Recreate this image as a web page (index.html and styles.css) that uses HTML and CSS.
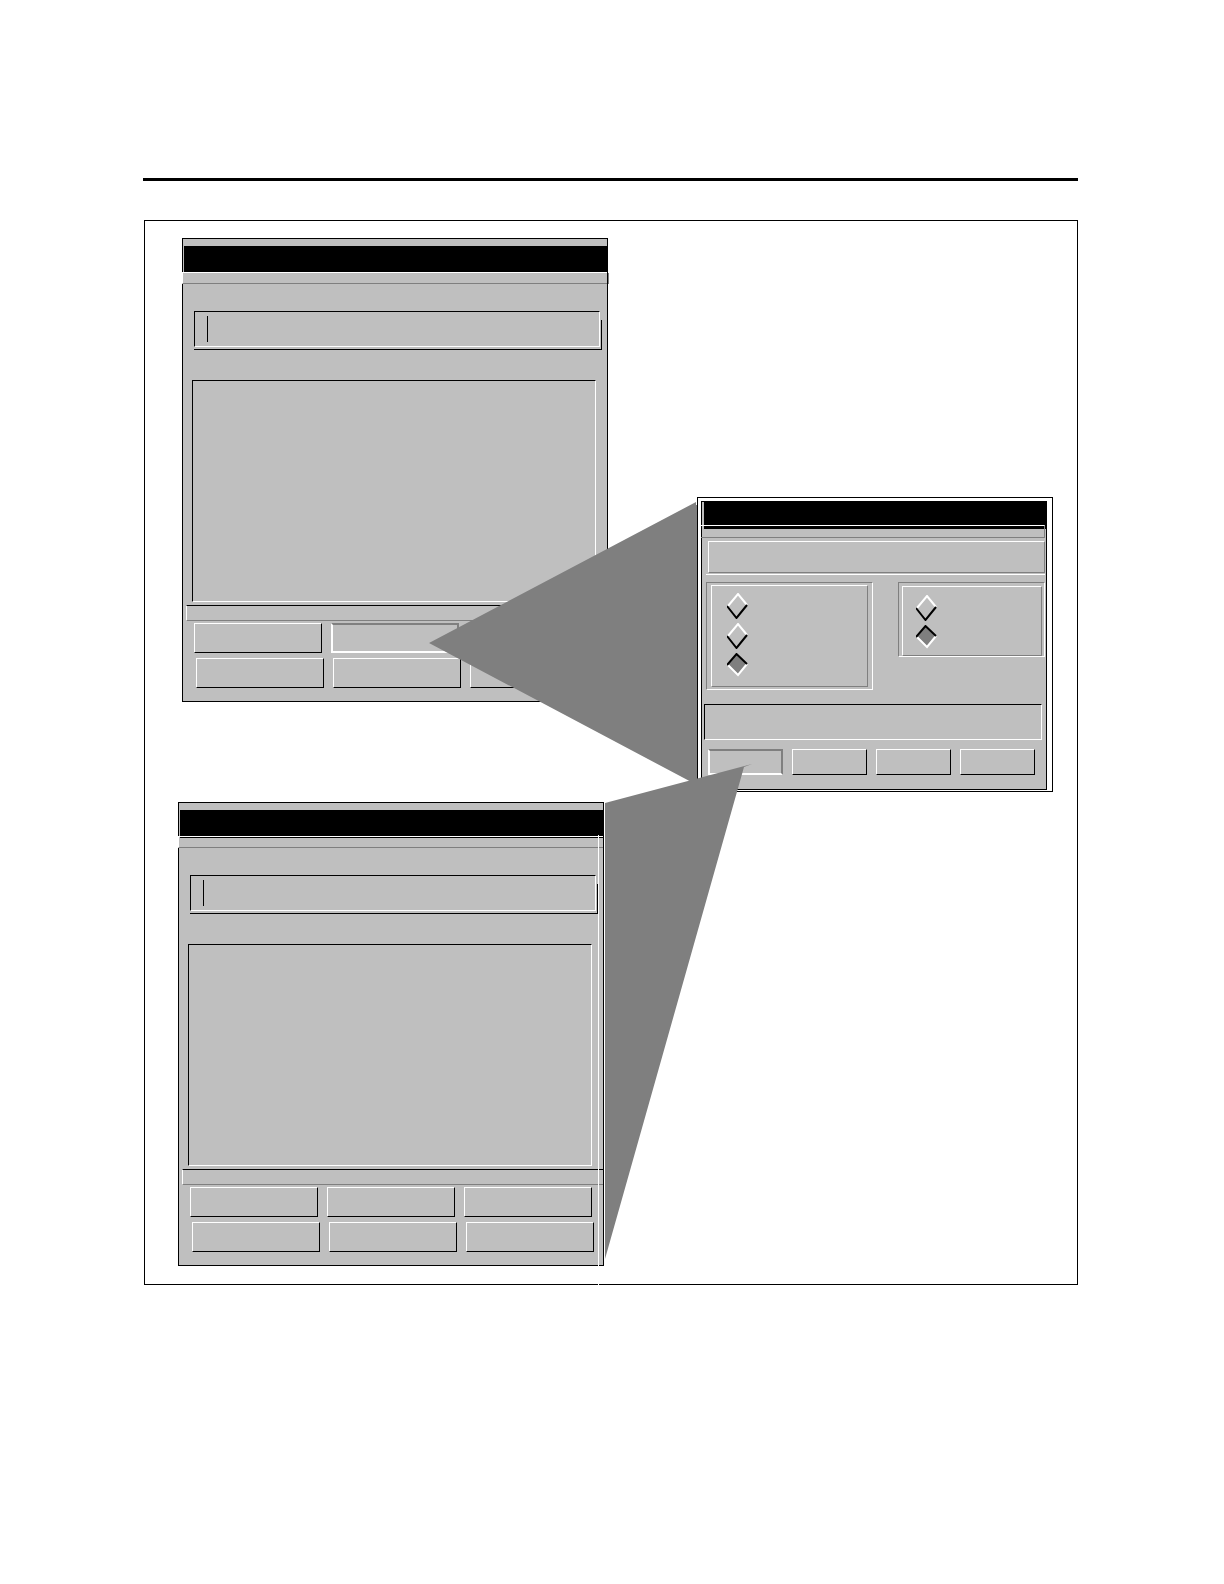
FILE: index.html
```html
<!DOCTYPE html>
<html lang="en">
  <head>
    <meta charset="UTF-8" />
    <meta name="viewport" content="width=device-width, initial-scale=1.0" />
    <title>Dialogs</title>
    <link rel="stylesheet" href="styles.css">
  </head>
  <body>
    <header class="page-header"></header>
    <main class="canvas">
      <div class="column">
        <form class="window">
          <div class="titlebar"></div>
          <div class="menubar"></div>
          <div class="entry">
            <input type="text" aria-label="Entry" />
            <span class="caret"></span>
          </div>
          <select class="list" size="8" aria-label="List"></select>
          <div class="separator"></div>
          <div class="buttons">
            <button type="button" aria-label="Button 1"></button>
            <button type="button" class="pressed" aria-label="Button 2"></button>
            <button type="button" aria-label="Button 3"></button>
          </div>
          <div class="buttons second">
            <button type="button" aria-label="Button 4"></button>
            <button type="button" aria-label="Button 5"></button>
            <button type="button" aria-label="Button 6"></button>
          </div>
        </form>

        <form class="window lower">
          <div class="titlebar"></div>
          <div class="menubar"></div>
          <div class="entry">
            <input type="text" aria-label="Entry" />
            <span class="caret"></span>
          </div>
          <select class="list" size="8" aria-label="List"></select>
          <div class="separator"></div>
          <div class="buttons">
            <button type="button" aria-label="Button 1"></button>
            <button type="button" aria-label="Button 2"></button>
            <button type="button" aria-label="Button 3"></button>
          </div>
          <div class="buttons second">
            <button type="button" aria-label="Button 4"></button>
            <button type="button" aria-label="Button 5"></button>
            <button type="button" aria-label="Button 6"></button>
          </div>
        </form>
      </div>

      <form class="dialog">
        <div class="dialog-inner">
          <div class="dialog-title"></div>
          <div class="dialog-menu"></div>
          <div class="message"><div class="message-box"></div></div>
          <div class="groups">
            <div class="group">
              <div class="group-inner">
                <label class="radio">
                  <input type="radio" name="first" aria-label="Option 1" />
                  <svg viewBox="0 0 21 26"><path class="light" d="M1 13L11 1L20 12" /><path class="dark" d="M0 13L9.500 25L20 12" /></svg>
                </label>
                <label class="radio">
                  <input type="radio" name="first" aria-label="Option 2" />
                  <svg viewBox="0 0 21 26"><path class="light" d="M1 13L11 1L20 12" /><path class="dark" d="M0 13L9.500 25L20 12" /></svg>
                </label>
                <label class="radio">
                  <input type="radio" name="first" aria-label="Option 3" checked />
                  <svg viewBox="0 0 21 26"><path class="fill" d="M0 11L9.500 1L20 11L11 22Z" /><path class="light" d="M1 12L11 22L20 11" /><path class="dark" d="M0 12L9.500 1L20 11" /></svg>
                </label>
              </div>
            </div>
            <div class="group small">
              <div class="group-inner">
                <label class="radio">
                  <input type="radio" name="second" aria-label="Option 1" />
                  <svg viewBox="0 0 21 26"><path class="light" d="M1 13L11 1L20 12" /><path class="dark" d="M0 13L9.500 25L20 12" /></svg>
                </label>
                <label class="radio">
                  <input type="radio" name="second" aria-label="Option 2" checked />
                  <svg viewBox="0 0 21 26"><path class="fill" d="M0 11L9.500 1L20 11L11 22Z" /><path class="light" d="M1 12L11 22L20 11" /><path class="dark" d="M0 12L9.500 1L20 11" /></svg>
                </label>
              </div>
            </div>
          </div>
          <input class="field" type="text" aria-label="Field" />
          <div class="dialog-buttons">
            <button type="button" class="pressed" aria-label="Button 1"></button>
            <button type="button" aria-label="Button 2"></button>
            <button type="button" aria-label="Button 3"></button>
            <button type="button" aria-label="Button 4"></button>
          </div>
        </div>
      </form>

      <svg class="callouts" aria-hidden="true">
        <path d="M284 422L551 281V284H552V564Z" />
        <path d="M460 582L607 543L599 546L460 1038Z" />
        <path class="seam" d="M459.500 581V615M459.500 628V948M459.500 964V1038M453.500 614V1064" />
      </svg>
    </main>
  </body>
</html>
```
FILE: styles.css
```css
* {
  box-sizing: border-box;
  margin: 0;
  padding: 0;
}
body {
  padding: 0 146px 0 144px;
  background-color: #fff;
  font-family: "Liberation Sans", Arial, sans-serif;
}
.page-header {
  margin-left: -1px;
  padding-top: 178px;
  border-bottom: 3px solid #000;
}
.canvas {
  position: relative;
  display: flex;
  justify-content: space-between;
  align-items: flex-start;
  margin-top: 39px;
  padding: 17px 24px 18px 33px;
  border: 1px solid #000;
}
.column {
  display: flex;
  flex-direction: column;
  gap: 100px;
}
/* main windows */
.window {
  width: 426px;
  margin-left: 4px;
  padding: 7px 0 13px;
  border: 1px solid #000;
  background-color: #bfbfbf;
}
.lower {
  margin-left: 0;
}
.titlebar {
  height: 26px;
  margin-left: 1px;
  background-color: #000;
}
.menubar {
  position: relative;
  height: 12px;
  margin-left: -1px;
  border-top: 1px solid #fff;
  border-bottom: 1px solid #7f7f7f;
  border-left: 1px solid #fff;
}
.menubar::after {
  content: "";
  position: absolute;
  top: 0;
  right: -2px;
  width: 1px;
  height: 11px;
  background-color: #7f7f7f;
}
.lower .menubar::after {
  display: none;
}
.lower .menubar::before {
  content: "";
  position: absolute;
  top: 0;
  left: 1px;
  right: 0;
  height: 1px;
  background-color: #000;
}
.entry {
  position: relative;
  height: 39px;
  margin: 27px 5px 0 11px;
  padding-right: 2px;
  border-bottom: 1px solid #000;
}
.entry::after {
  content: "";
  position: absolute;
  right: 0;
  bottom: 0;
  width: 1px;
  height: 29px;
  background-color: #000;
}
.entry input,
.list,
.field {
  display: block;
  appearance: none;
  border: 1px solid;
  border-color: #000 #fff #fff #000;
  border-radius: 0;
  outline: none;
  background-color: transparent;
}
.entry input {
  width: 100%;
  height: 36px;
  padding: 0 16px;
}
.caret {
  position: absolute;
  top: 5px;
  left: 13px;
  width: 1px;
  height: 26px;
  background-color: #000;
}
.list {
  width: calc(100% - 20px);
  height: 222px;
  margin: 30px 11px 0 9px;
}
.separator {
  height: 16px;
  margin: 3px 0 0 3px;
  border-top: 1px solid #000;
  border-bottom: 1px solid #7f7f7f;
  border-left: 1px solid #fff;
}
.buttons {
  display: grid;
  grid-template-columns: repeat(3, 128px);
  gap: 9px;
  margin: 2px 0 0 11px;
}
.second {
  margin: 5px 0 0 13px;
}
button {
  height: 30px;
  border: 1px solid;
  border-color: #fff #000 #000 #fff;
  background-color: #bfbfbf;
}
.pressed {
  border-width: 2px;
  border-color: #7f7f7f #7f7f7f #fff #fff;
}
/* dialog */
.dialog {
  width: 356px;
  margin-top: 259px;
  padding: 3px 5px 1px 3px;
  border: 1px solid #000;
  background-color: #fff;
}
.dialog-inner {
  padding-bottom: 14px;
  border: 1px solid #000;
  background-color: #bfbfbf;
}
.dialog-title {
  height: 27px;
  margin: 0 -1px 0 2px;
  background-color: #000;
}
.dialog-menu {
  height: 13px;
  margin: -4px 1px 0 -1px;
  border-top: 1px solid #fff;
  border-right: 1px solid #7f7f7f;
  border-bottom: 1px solid #7f7f7f;
}
.message {
  margin: 3px 1px 0 4px;
  padding: 0 0 1px 2px;
  border-bottom: 1px solid #fff;
}
.message-box {
  height: 32px;
  border: 1px solid;
  border-color: #fff #7f7f7f #7f7f7f #fff;
}
.groups {
  display: flex;
  justify-content: space-between;
  align-items: flex-start;
  height: 108px;
  margin: 7px 1px 0 4px;
}
.group {
  width: 167px;
  padding: 2px 4px 2px 4px;
  border: 1px solid;
  border-color: #7f7f7f #fff #fff #7f7f7f;
}
.group-inner {
  display: flex;
  flex-direction: column;
  gap: 4px;
  padding: 7px 15px;
  border: 1px solid;
  border-color: #fff #7f7f7f #7f7f7f #fff;
}
.small {
  width: 147px;
  padding: 3px 2px 0 3px;
}
.small .group-inner {
  padding: 8px 13px 4px;
}
.radio {
  position: relative;
  height: 26px;
}
.radio input {
  position: absolute;
  width: 21px;
  height: 26px;
  opacity: 0;
}
.radio svg {
  display: block;
  width: 21px;
  height: 26px;
  fill: none;
  stroke-width: 2;
}
.light {
  stroke: #fff;
}
.dark {
  stroke: #000;
}
.fill {
  fill: #7f7f7f;
}
.field {
  width: calc(100% - 6px);
  height: 36px;
  margin: 14px 4px 0 2px;
}
.dialog-buttons {
  display: grid;
  grid-template-columns: repeat(4, 75px);
  gap: 9px;
  margin: 9px 0 0 6px;
}
.dialog-buttons button {
  height: 26px;
}
/* callouts over the windows */
.callouts {
  position: absolute;
  top: 0;
  left: 0;
  width: 100%;
  height: 100%;
  overflow: visible;
  fill: #7f7f7f;
  pointer-events: none;
}
.seam {
  fill: none;
  stroke: #fff;
}
```
